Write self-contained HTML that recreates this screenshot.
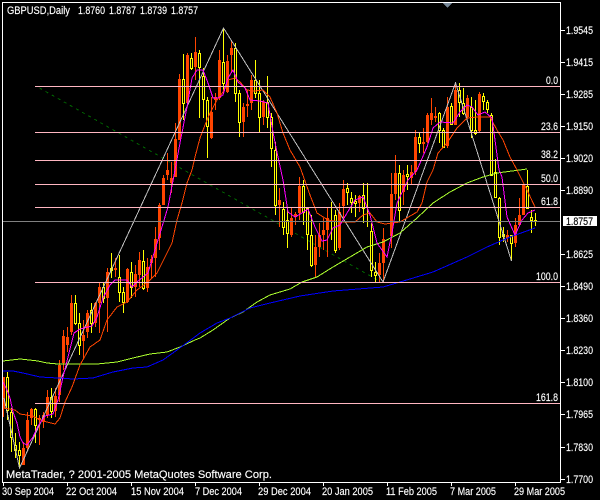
<!DOCTYPE html>
<html><head><meta charset="utf-8"><style>
html,body{margin:0;padding:0;background:#000;width:600px;height:500px;overflow:hidden}
svg{display:block}
text{font-family:"Liberation Sans",sans-serif;font-size:11px;fill:#fff;stroke:#fff;stroke-width:.15}
</style></head><body>
<svg width="600" height="500" viewBox="0 0 600 500" xmlns="http://www.w3.org/2000/svg">
<rect width="600" height="500" fill="#000"/>
<g shape-rendering="crispEdges" fill="none">
<path d="M39.5 88L381 282" stroke="#006400" stroke-dasharray="3 4"/>
<!-- orange wicks -->
<path stroke="#ff4500" d="M3.5 377V417M23.5 442V465M27.5 412V450M31.5 408V425M39.5 415V445M43.5 412V428M47.5 390V418M55.5 388V417M59.5 360V402M63.5 330V370M67.5 327V352M71.5 295V335M83.5 320V358M87.5 310V338M95.5 302V327M99.5 283V333M107.5 268V332M115.5 258V277M127.5 268V303M135.5 265V297M139.5 252V287M147.5 258V292M151.5 255V278M155.5 227V277M159.5 203V250M163.5 175V205M167.5 153V180M171.5 162V193M175.5 123V177M179.5 74V140M187.5 53V103M195.5 37V80M211.5 97V139M215.5 93V110M219.5 50V100M227.5 55V93M231.5 40V73M243.5 103V137M247.5 90V117M251.5 75V110M263.5 100V125M279.5 188V227M291.5 208V237M295.5 212V225M299.5 177V220M315.5 235V277M319.5 223V257M323.5 218V250M327.5 208V257M339.5 203V250M343.5 180V218M359.5 195V212M379.5 253V282M383.5 228V282M391.5 173V248M395.5 155V200M403.5 170V205M411.5 165V185M415.5 130V175M423.5 128V153M427.5 113V143M431.5 98V125M435.5 107V122M447.5 97V148M455.5 85V125M467.5 95V118M479.5 92V132M507.5 230V242M515.5 218V247M519.5 198V225M523.5 185V215"/>
<!-- orange bodies -->
<path stroke="#ff4500" stroke-width="3" d="M3.5 377V408M23.5 448V465M27.5 420V448M31.5 409V418M39.5 418V420M43.5 415V422M47.5 397V415M55.5 396V411M59.5 365V395M63.5 336V363M67.5 337V345M71.5 303V332M83.5 335V341M87.5 313V332M95.5 303V323M99.5 287V303M107.5 272V298M115.5 268V270M127.5 269V302M135.5 274V287M139.5 260V275M147.5 267V288M151.5 259V263M155.5 239V258M159.5 205V238M163.5 178V205M167.5 170V175M171.5 178V183M175.5 139V177M179.5 79V140M187.5 55V103M195.5 52V67M211.5 112V138M215.5 97V100M219.5 60V98M227.5 61V92M231.5 48V55M243.5 107V122M247.5 104V106M251.5 80V103M263.5 102V117M279.5 200V205M291.5 218V235M295.5 214V217M299.5 186V213M315.5 247V265M319.5 235V247M323.5 230V235M327.5 218V230M339.5 212V248M343.5 189V206M359.5 196V203M379.5 263V275M383.5 239V263M391.5 194V236M395.5 173V194M403.5 175V192M411.5 172V178M415.5 137V172M423.5 142V144M427.5 115V142M431.5 113V120M435.5 116V118M447.5 107V146M455.5 90V125M467.5 98V117M479.5 94V131M507.5 235V238M515.5 225V243M519.5 215V225M523.5 185V215"/>
<!-- yellow wicks -->
<path stroke="#ffff00" d="M7.5 372V420M11.5 408V452M15.5 433V458M19.5 442V468M35.5 408V443M51.5 388V418M75.5 295V325M79.5 313V355M91.5 303V333M103.5 283V303M111.5 253V278M119.5 255V302M123.5 287V313M131.5 262V298M143.5 250V290M183.5 54V120M191.5 53V70M199.5 50V118M203.5 68V118M207.5 97V158M223.5 28V93M235.5 43V102M239.5 90V137M255.5 60V98M259.5 80V132M267.5 76V128M271.5 113V167M275.5 142V215M283.5 202V235M287.5 208V248M303.5 180V225M307.5 207V250M311.5 215V267M331.5 202V240M335.5 210V253M347.5 183V205M351.5 192V213M355.5 195V217M363.5 183V223M367.5 183V227M371.5 223V277M375.5 262V282M399.5 165V222M407.5 165V190M419.5 132V153M439.5 112V143M443.5 128V148M451.5 103V125M459.5 83V117M463.5 88V115M471.5 97V138M475.5 100V135M483.5 93V110M487.5 100V113M491.5 113V175M495.5 159V197M499.5 197V245M503.5 227V242M511.5 235V261M527.5 170V208M531.5 210V233M535.5 213V226"/>
<!-- yellow bodies -->
<path stroke="#ffff00" fill="#000" d="M6.5 377.5h2V410.5h-2zM10.5 412.5h2V437.5h-2zM14.5 445.5h2V450.5h-2zM18.5 450.5h2V455.5h-2zM34.5 409.5h2V425.5h-2zM50.5 397.5h2V411.5h-2zM74.5 303.5h2V323.5h-2zM78.5 323.5h2V345.5h-2zM90.5 310.5h2V323.5h-2zM102.5 287.5h2V298.5h-2zM110.5 268.5h2V270.5h-2zM118.5 277.5h2V292.5h-2zM122.5 292.5h2V302.5h-2zM130.5 272.5h2V287.5h-2zM142.5 261.5h2V288.5h-2zM182.5 79.5h2V103.5h-2zM190.5 58.5h2V68.5h-2zM198.5 53.5h2V67.5h-2zM202.5 76.5h2V99.5h-2zM206.5 100.5h2V126.5h-2zM222.5 62.5h2V83.5h-2zM234.5 48.5h2V93.5h-2zM238.5 93.5h2V122.5h-2zM254.5 80.5h2V93.5h-2zM258.5 93.5h2V117.5h-2zM266.5 102.5h2V117.5h-2zM270.5 117.5h2V148.5h-2zM274.5 150.5h2V205.5h-2zM282.5 209.5h2V227.5h-2zM286.5 220.5h2V233.5h-2zM302.5 186.5h2V212.5h-2zM306.5 208.5h2V234.5h-2zM310.5 235.5h2V265.5h-2zM334.5 215.5h2V250.5h-2zM346.5 188.5h2V192.5h-2zM350.5 198.5h2V202.5h-2zM354.5 201.5h2V203.5h-2zM362.5 195.5h2V208.5h-2zM370.5 231.5h2V270.5h-2zM374.5 272.5h2V275.5h-2zM398.5 173.5h2V210.5h-2zM406.5 174.5h2V176.5h-2zM418.5 137.5h2V143.5h-2zM438.5 113.5h2V130.5h-2zM442.5 130.5h2V147.5h-2zM450.5 106.5h2V124.5h-2zM458.5 90.5h2V102.5h-2zM462.5 103.5h2V113.5h-2zM470.5 107.5h2V130.5h-2zM474.5 130.5h2V133.5h-2zM482.5 96.5h2V101.5h-2zM486.5 102.5h2V109.5h-2zM490.5 115.5h2V175.5h-2zM494.5 172.5h2V197.5h-2zM498.5 198.5h2V237.5h-2zM502.5 234.5h2V236.5h-2zM510.5 235.5h2V243.5h-2zM526.5 186.5h2V208.5h-2zM530.5 217.5h2V220.5h-2zM534.5 220.5h2V221.5h-2z"/>
<!-- zigzag -->
<polyline stroke="#c0c0c0" points="4,398 19.5,468 223.5,28 383,282 455.5,83 511.5,261"/>
<!-- lime MA -->
<polyline stroke="#adff2f" points="3,361 20,359 38,361 47,363 58,364 97,364 117,362 133,358 150,354 167,352 180,347 195,340 200,338 213,330 230,318 243,312 257,302 270,295 290,289 302,282 317,277 333,267 350,257 367,247 383,242 400,233 417,218 433,203 450,192 467,183 483,177 497,173 527,169"/>
<!-- blue MA -->
<polyline stroke="#0000ff" points="3,371 13,371 23,373 40,377 58,378 73,379 93,378 113,372 133,368 147,367 163,360 177,350 188,342 200,333 217,323 230,318 250,308 270,303 300,296 333,291 383,287 400,282 433,272 467,257 487,247 510,237 535,228"/>
<!-- orange MA -->
<polyline stroke="#ff4500" points="3,408 15,410 20,414 33,416 40,420 47,422 55,424 60,418 65,402 72,387 80,365 90,347 100,340 107,320 117,307 127,302 137,290 148,282 157,273 167,253 172,243 177,220 182,203 187,183 192,170 195,157 200,138 205,125 210,113 217,100 223,92 228,80 235,78 240,82 247,90 255,91 263,90 270,97 277,113 283,133 290,150 300,167 310,195 317,213 328,220 340,222 355,222 363,215 370,213 377,222 385,224 400,222 417,212 422,203 427,182 433,170 438,153 447,143 457,128 467,118 477,117 490,117 497,130 503,140 510,157 517,170 527,190 535,207"/>
<!-- magenta MA -->
<polyline stroke="#ff00ff" points="3,382 7,390 10,398 13,412 17,423 20,437 23,443 27,445 33,437 38,426 45,416 53,414 58,400 63,377 68,357 74,333 80,329 92,326 97,317 103,298 110,285 115,280 127,280 132,287 137,282 143,277 148,273 158,240 168,207 175,170 180,143 187,107 192,78 197,70 203,70 208,83 213,98 218,98 223,95 228,78 233,70 238,82 245,88 250,100 260,101 268,103 273,132 278,157 283,180 288,212 295,217 302,213 308,209 315,227 322,241 327,240 333,228 340,225 347,213 355,200 363,197 370,215 377,243 387,257 392,233 397,203 408,180 417,170 427,147 433,128 440,122 453,123 460,112 467,105 472,107 478,115 485,112 492,118 495,140 499,170 502,177 507,217 515,235 522,220 528,213 535,210"/>
<!-- fib lines -->
<g stroke="#ffb6c1">
<path d="M35 86.5H560M35 132.5H560M35 160.5H560M35 184.5H560M35 207.5H560M35 282.5H560M35 403.5H560"/>
</g>
<path d="M3 221.5H560" stroke="#808080"/>
<!-- frame -->
<path d="M2.5 2.5H560.5V482.5H2.5Z" stroke="#fff"/>
<path stroke="#fff" d="M561 30.5h4M561 62.5h4M561 94.5h4M561 126.5h4M561 158.5h4M561 190.5h4M561 254.5h4M561 286.5h4M561 318.5h4M561 350.5h4M561 382.5h4M561 414.5h4M561 447.5h4M561 479.5h4M3.5 483v3M67.5 483v3M131.5 483v3M195.5 483v3M259.5 483v3M323.5 483v3M387.5 483v3M451.5 483v3M515.5 483v3"/>
<path d="M443 3H452L447.5 8Z" fill="#778899" stroke="none"/>
<rect x="563" y="216" width="34" height="10" fill="#fff" stroke="none"/>
</g>
<text x="7" y="14" textLength="63" lengthAdjust="spacingAndGlyphs">GBPUSD,Daily</text>
<text x="78" y="14" textLength="27" lengthAdjust="spacingAndGlyphs">1.8760</text>
<text x="109" y="14" textLength="27" lengthAdjust="spacingAndGlyphs">1.8787</text>
<text x="140" y="14" textLength="27" lengthAdjust="spacingAndGlyphs">1.8739</text>
<text x="171" y="14" textLength="27" lengthAdjust="spacingAndGlyphs">1.8757</text>
<text x="6" y="478" textLength="266" lengthAdjust="spacingAndGlyphs">MetaTrader, ? 2001-2005 MetaQuotes Software Corp.</text>
<text x="546" y="84" textLength="12" lengthAdjust="spacingAndGlyphs">0.0</text>
<text x="541" y="130" textLength="17" lengthAdjust="spacingAndGlyphs">23.6</text>
<text x="541" y="158" textLength="17" lengthAdjust="spacingAndGlyphs">38.2</text>
<text x="541" y="182" textLength="17" lengthAdjust="spacingAndGlyphs">50.0</text>
<text x="541" y="205" textLength="17" lengthAdjust="spacingAndGlyphs">61.8</text>
<text x="536" y="280" textLength="22" lengthAdjust="spacingAndGlyphs">100.0</text>
<text x="536" y="401" textLength="22" lengthAdjust="spacingAndGlyphs">161.8</text>
<g>
<text x="566" y="34" textLength="27" lengthAdjust="spacingAndGlyphs">1.9545</text>
<text x="566" y="66" textLength="27" lengthAdjust="spacingAndGlyphs">1.9415</text>
<text x="566" y="98" textLength="27" lengthAdjust="spacingAndGlyphs">1.9285</text>
<text x="566" y="130" textLength="27" lengthAdjust="spacingAndGlyphs">1.9150</text>
<text x="566" y="162" textLength="27" lengthAdjust="spacingAndGlyphs">1.9020</text>
<text x="566" y="194" textLength="27" lengthAdjust="spacingAndGlyphs">1.8890</text>
<text x="566" y="225" textLength="27" lengthAdjust="spacingAndGlyphs" style="fill:#000;stroke:#000">1.8757</text>
<text x="566" y="258" textLength="27" lengthAdjust="spacingAndGlyphs">1.8625</text>
<text x="566" y="290" textLength="27" lengthAdjust="spacingAndGlyphs">1.8490</text>
<text x="566" y="322" textLength="27" lengthAdjust="spacingAndGlyphs">1.8360</text>
<text x="566" y="354" textLength="27" lengthAdjust="spacingAndGlyphs">1.8230</text>
<text x="566" y="386" textLength="27" lengthAdjust="spacingAndGlyphs">1.8100</text>
<text x="566" y="418" textLength="27" lengthAdjust="spacingAndGlyphs">1.7965</text>
<text x="566" y="451" textLength="27" lengthAdjust="spacingAndGlyphs">1.7830</text>
<text x="566" y="483" textLength="27" lengthAdjust="spacingAndGlyphs">1.7700</text>
</g>
<text x="2" y="495" textLength="52" lengthAdjust="spacingAndGlyphs">30 Sep 2004</text>
<text x="66" y="495" textLength="51" lengthAdjust="spacingAndGlyphs">22 Oct 2004</text>
<text x="131" y="495" textLength="53" lengthAdjust="spacingAndGlyphs">15 Nov 2004</text>
<text x="195" y="495" textLength="47" lengthAdjust="spacingAndGlyphs">7 Dec 2004</text>
<text x="258" y="495" textLength="53" lengthAdjust="spacingAndGlyphs">29 Dec 2004</text>
<text x="322" y="495" textLength="51" lengthAdjust="spacingAndGlyphs">20 Jan 2005</text>
<text x="386" y="495" textLength="51" lengthAdjust="spacingAndGlyphs">11 Feb 2005</text>
<text x="450" y="495" textLength="46" lengthAdjust="spacingAndGlyphs">7 Mar 2005</text>
<text x="514" y="495" textLength="51" lengthAdjust="spacingAndGlyphs">29 Mar 2005</text>
</svg>
</body></html>
